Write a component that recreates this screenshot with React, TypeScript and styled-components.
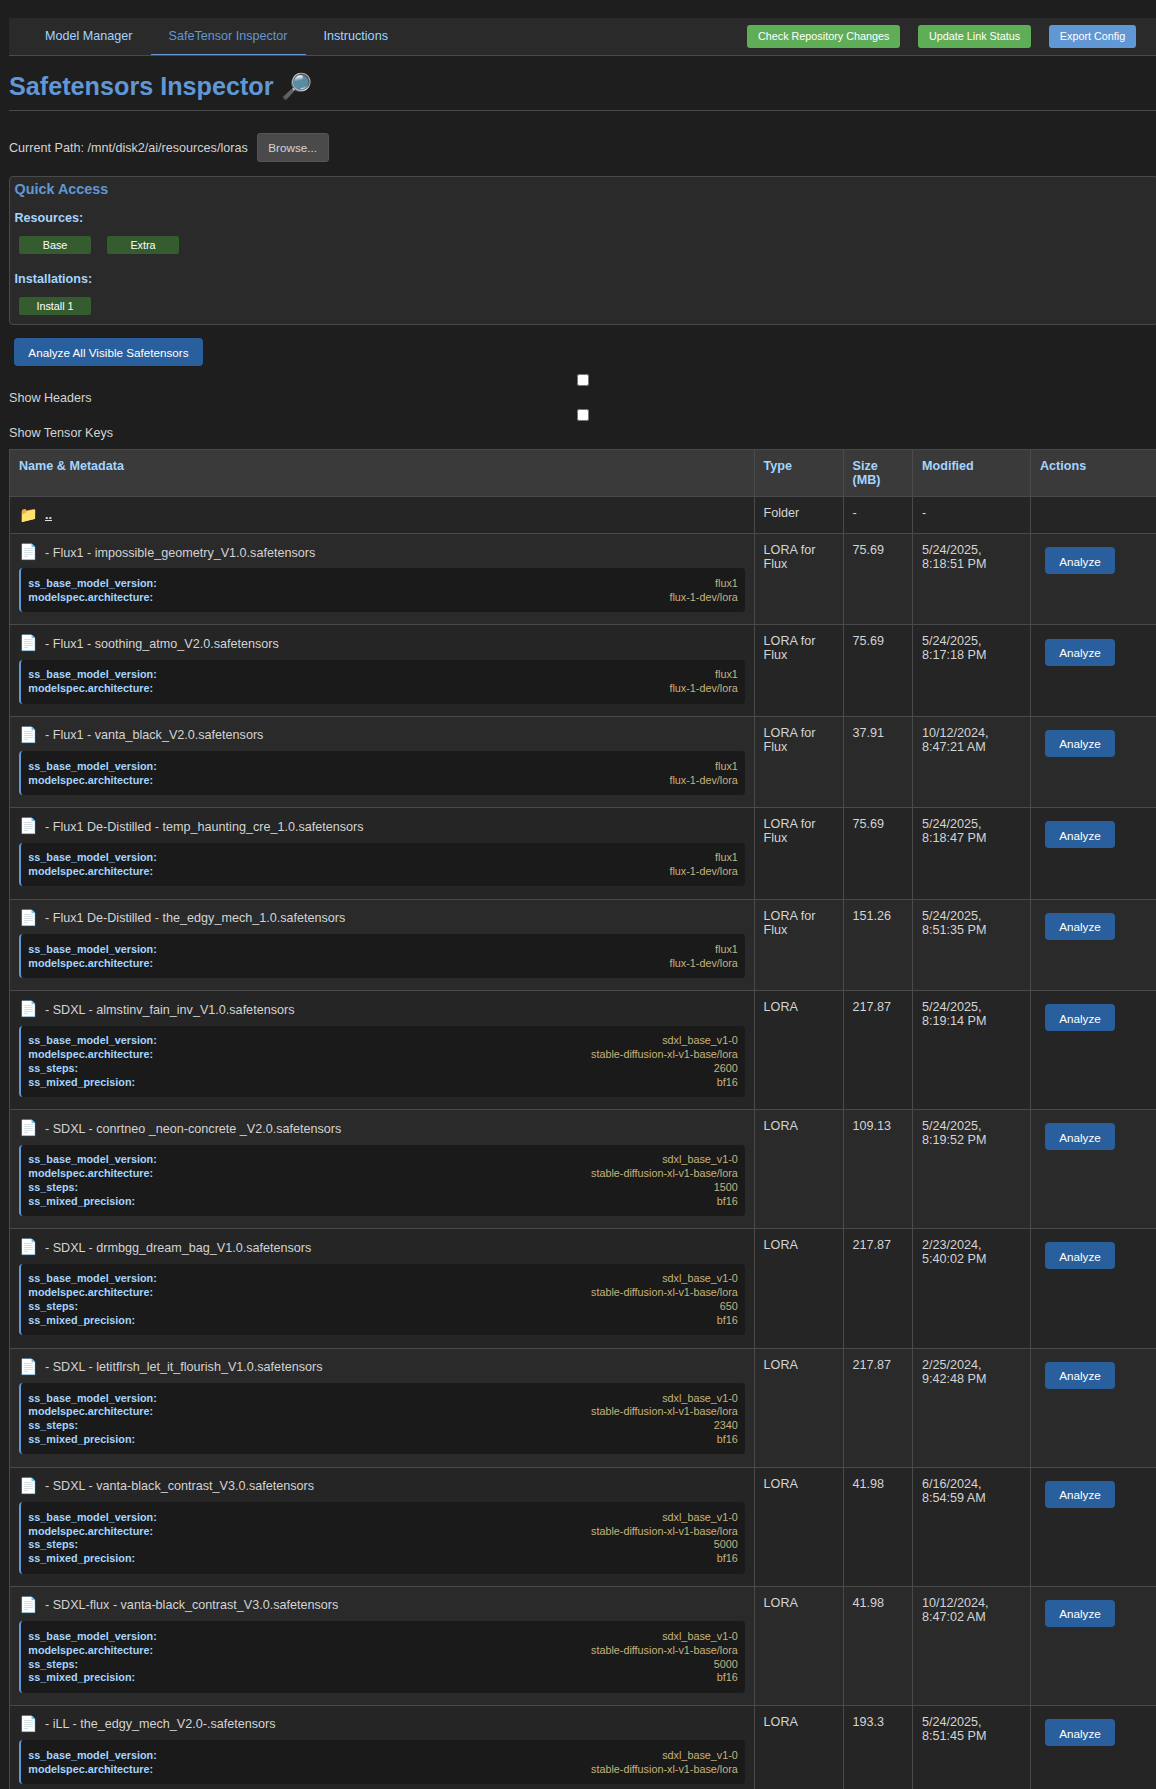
import React from "react";
import styled, { createGlobalStyle, css } from "styled-components";

const color = {
  page: "#1e1e1e",
  panel: "#2a2a2a",
  rowOdd: "#252525",
  head: "#3a3a3a",
  inset: "#1a1a1a",
  line: "#4a4a4a",
  text: "#d4d4d4",
  accent: "#6197d5",
  label: "#a3d5ff",
  value: "#c8b27c",
};

const GlobalStyle = createGlobalStyle`
  html, body { margin: 0; background: ${color.page}; }
  html { overflow: hidden; }
  body {
    font-family: "Liberation Sans", Arial, sans-serif;
    font-size: 12.6px;
    line-height: 14px;
    color: ${color.text};
  }
  button { font-family: inherit; margin: 0; }
`;

const Page = styled.div`
  width: 1149px;
  margin-left: 9px;
  padding-top: 18px;
`;

const Nav = styled.nav`
  display: flex;
  align-items: center;
  justify-content: space-between;
  height: 37px;
  padding: 0 22px 0 18px;
  background: ${color.panel};
  border-bottom: 1px solid ${color.line};
`;

const Tabs = styled.div`
  display: flex;
  height: 100%;
`;

const Tab = styled.a<{ $active?: boolean }>`
  box-sizing: border-box;
  padding: 11px 18px 0;
  height: 37px;
  color: ${(p) => (p.$active ? color.accent : color.label)};
  border-bottom: 1px solid ${(p) => (p.$active ? color.accent : "transparent")};
`;

const NavActions = styled.div`
  display: flex;
  gap: 18px;
`;

const NavButton = styled.button<{ $tone: "green" | "blue" }>`
  height: 23px;
  padding: 0 10.8px 1px;
  border: 0;
  border-radius: 3px;
  font-size: 10.8px;
  color: #fff;
  background: ${(p) => (p.$tone === "green" ? "#60ad58" : color.accent)};
`;

const Title = styled.h1`
  margin: 0;
  height: 43px;
  padding-top: 11px;
  border-bottom: 1px solid ${color.line};
  font-size: 25.2px;
  line-height: 38px;
  color: ${color.accent};
`;

const PathBar = styled.div`
  display: flex;
  align-items: center;
  gap: 9px;
  margin-top: 22px;
  height: 29px;
`;

const BrowseButton = styled.button`
  width: 72px;
  height: 29px;
  padding: 0;
  border: 1px solid #555;
  border-radius: 3px;
  background: ${color.line};
  color: ${color.text};
  font-size: 11.7px;
`;

const QuickAccess = styled.section`
  box-sizing: border-box;
  height: 149px;
  margin-top: 14px;
  padding: 4px 4.5px;
  border: 1px solid ${color.line};
  border-radius: 4px;
  background: ${color.panel};
`;

const QuickTitle = styled.h3`
  margin: 0;
  font-size: 14.4px;
  line-height: 17px;
  color: ${color.accent};
`;

const QuickLabel = styled.div`
  margin-top: 13px;
  font-weight: bold;
  color: ${color.label};
`;

const QuickList = styled.div`
  display: flex;
  gap: 16px;
  padding: 11px 0 5px 4.5px;
`;

const QuickButton = styled.button`
  width: 72px;
  height: 18px;
  padding: 0;
  border: 0;
  border-radius: 2px;
  font-size: 10.8px;
  color: #fff;
  background: #355c2f;
`;

const primary = css`
  padding: 1px 0 0;
  border: 0;
  border-radius: 4px;
  color: #fff;
  background: #285f9c;
  font-size: 11.7px;
`;

const AnalyzeAll = styled.button`
  ${primary}
  display: block;
  width: 189px;
  height: 28px;
  padding-top: 0;
  margin: 13px 0 0 5px;
`;

const Toggles = styled.div`
  padding-top: 8px;
`;

const Toggle = styled.label`
  display: flex;
  flex-direction: column;
  height: 35px;
  padding-right: 0.6px;
`;

const Check = styled.input`
  width: 11.7px;
  height: 11.7px;
  margin: 0 auto 5.3px;
`;

const Table = styled.table`
  width: 1149px;
  table-layout: fixed;
  border-collapse: separate;
  border-spacing: 0;
  border-top: 1px solid ${color.line};
  border-left: 1px solid ${color.line};
  margin-top: 5px;
`;

const Col = styled.col<{ $w: number }>`
  width: ${(p) => p.$w}px;
`;

const cell = css`
  padding: 9px 9px 0;
  vertical-align: top;
  text-align: left;
  border-right: 1px solid ${color.line};
  border-bottom: 1px solid ${color.line};

  &:nth-child(2),
  &:nth-child(3) {
    padding-left: 8.6px;
  }
`;

const Th = styled.th`
  ${cell}
  height: 37px;
  background: ${color.head};
  color: ${color.label};
`;

const Td = styled.td`
  ${cell}
`;

const Row = styled.tr`
  background: ${color.rowOdd};
  &:nth-child(even) { background: ${color.panel}; }
`;

const FolderCell = styled(Td)`
  height: 27px;
`;

const NameLine = styled.div`
  display: flex;
  align-items: center;
  gap: 7px;
  height: 19px;
`;

const Icon = styled.span`
  width: 19px;
  font-size: 15.12px;
  line-height: 19px;
  padding-bottom: 2px;
`;

const ParentLink = styled.a`
  padding-bottom: 1px;
  font-weight: bold;
  color: #e0e0e0;
  text-decoration: underline;
`;

const Meta = styled.div`
  margin: 6.45px 0 12.29px;
  padding: 8.6px 7.2px 7.4px 7.3px;
  background: ${color.inset};
  border-left: 2px solid ${color.accent};
  border-radius: 4px;
  font-size: 10.8px;
`;

const MetaLine = styled.div`
  display: flex;
  justify-content: space-between;
  line-height: 13.86px;
`;

const MetaKey = styled.strong`
  color: ${color.label};
`;

const MetaValue = styled.span`
  color: ${color.value};
`;

const AnalyzeButton = styled.button`
  ${primary}
  width: 70px;
  height: 27px;
  margin: 4.1px 0 0 5px;
  display: block;
`;

type Model = {
  name: string;
  type: string;
  size: string;
  date: string;
  time: string;
  meta: [string, string][];
};

const flux: [string, string][] = [
  ["ss_base_model_version:", "flux1"],
  ["modelspec.architecture:", "flux-1-dev/lora"],
];

const sdxl = (steps?: string): [string, string][] => [
  ["ss_base_model_version:", "sdxl_base_v1-0"],
  ["modelspec.architecture:", "stable-diffusion-xl-v1-base/lora"],
  ...(steps
    ? ([["ss_steps:", steps], ["ss_mixed_precision:", "bf16"]] as [string, string][])
    : []),
];

const models: Model[] = [
  { name: "- Flux1 - impossible_geometry_V1.0.safetensors", type: "LORA for Flux", size: "75.69", date: "5/24/2025,", time: "8:18:51 PM", meta: flux },
  { name: "- Flux1 - soothing_atmo_V2.0.safetensors", type: "LORA for Flux", size: "75.69", date: "5/24/2025,", time: "8:17:18 PM", meta: flux },
  { name: "- Flux1 - vanta_black_V2.0.safetensors", type: "LORA for Flux", size: "37.91", date: "10/12/2024,", time: "8:47:21 AM", meta: flux },
  { name: "- Flux1 De-Distilled - temp_haunting_cre_1.0.safetensors", type: "LORA for Flux", size: "75.69", date: "5/24/2025,", time: "8:18:47 PM", meta: flux },
  { name: "- Flux1 De-Distilled - the_edgy_mech_1.0.safetensors", type: "LORA for Flux", size: "151.26", date: "5/24/2025,", time: "8:51:35 PM", meta: flux },
  { name: "- SDXL - almstinv_fain_inv_V1.0.safetensors", type: "LORA", size: "217.87", date: "5/24/2025,", time: "8:19:14 PM", meta: sdxl("2600") },
  { name: "- SDXL - conrtneo _neon-concrete _V2.0.safetensors", type: "LORA", size: "109.13", date: "5/24/2025,", time: "8:19:52 PM", meta: sdxl("1500") },
  { name: "- SDXL - drmbgg_dream_bag_V1.0.safetensors", type: "LORA", size: "217.87", date: "2/23/2024,", time: "5:40:02 PM", meta: sdxl("650") },
  { name: "- SDXL - letitflrsh_let_it_flourish_V1.0.safetensors", type: "LORA", size: "217.87", date: "2/25/2024,", time: "9:42:48 PM", meta: sdxl("2340") },
  { name: "- SDXL - vanta-black_contrast_V3.0.safetensors", type: "LORA", size: "41.98", date: "6/16/2024,", time: "8:54:59 AM", meta: sdxl("5000") },
  { name: "- SDXL-flux - vanta-black_contrast_V3.0.safetensors", type: "LORA", size: "41.98", date: "10/12/2024,", time: "8:47:02 AM", meta: sdxl("5000") },
  { name: "- iLL - the_edgy_mech_V2.0-.safetensors", type: "LORA", size: "193.3", date: "5/24/2025,", time: "8:51:45 PM", meta: sdxl() },
];

const ModelRow = ({ model }: { model: Model }) => (
  <Row>
    <Td>
      <NameLine>
        <Icon>📄</Icon>
        <span>{model.name}</span>
      </NameLine>
      <Meta>
        {model.meta.map(([key, value]) => (
          <MetaLine key={key}>
            <MetaKey>{key}</MetaKey>
            <MetaValue>{value}</MetaValue>
          </MetaLine>
        ))}
      </Meta>
    </Td>
    <Td>{model.type}</Td>
    <Td>{model.size}</Td>
    <Td>
      {model.date} {model.time}
    </Td>
    <Td>
      <AnalyzeButton>Analyze</AnalyzeButton>
    </Td>
  </Row>
);

export default function App() {
  return (
    <>
      <GlobalStyle />
      <Page>
        <Nav>
          <Tabs>
            <Tab>Model Manager</Tab>
            <Tab $active>SafeTensor Inspector</Tab>
            <Tab>Instructions</Tab>
          </Tabs>
          <NavActions>
            <NavButton $tone="green">Check Repository Changes</NavButton>
            <NavButton $tone="green">Update Link Status</NavButton>
            <NavButton $tone="blue">Export Config</NavButton>
          </NavActions>
        </Nav>

        <Title>Safetensors Inspector 🔎</Title>

        <PathBar>
          <span>Current Path: /mnt/disk2/ai/resources/loras</span>
          <BrowseButton>Browse...</BrowseButton>
        </PathBar>

        <QuickAccess>
          <QuickTitle>Quick Access</QuickTitle>
          <QuickLabel>Resources:</QuickLabel>
          <QuickList>
            <QuickButton>Base</QuickButton>
            <QuickButton>Extra</QuickButton>
          </QuickList>
          <QuickLabel>Installations:</QuickLabel>
          <QuickList>
            <QuickButton>Install 1</QuickButton>
          </QuickList>
        </QuickAccess>

        <AnalyzeAll>Analyze All Visible Safetensors</AnalyzeAll>

        <Toggles>
          <Toggle>
            <Check type="checkbox" />
            Show Headers
          </Toggle>
          <Toggle>
            <Check type="checkbox" />
            Show Tensor Keys
          </Toggle>
        </Toggles>

        <Table>
          <colgroup>
            <Col $w={745} />
            <Col $w={89} />
            <Col $w={69} />
            <Col $w={118} />
            <Col $w={127} />
          </colgroup>
          <thead>
            <tr>
              <Th>Name &amp; Metadata</Th>
              <Th>Type</Th>
              <Th>Size (MB)</Th>
              <Th>Modified</Th>
              <Th>Actions</Th>
            </tr>
          </thead>
          <tbody>
            <Row>
              <FolderCell>
                <NameLine>
                  <Icon>📁</Icon>
                  <ParentLink>..</ParentLink>
                </NameLine>
              </FolderCell>
              <Td>Folder</Td>
              <Td>-</Td>
              <Td>-</Td>
              <Td />
            </Row>
            {models.map((m) => (
              <ModelRow key={m.name} model={m} />
            ))}
          </tbody>
        </Table>
      </Page>
    </>
  );
}
